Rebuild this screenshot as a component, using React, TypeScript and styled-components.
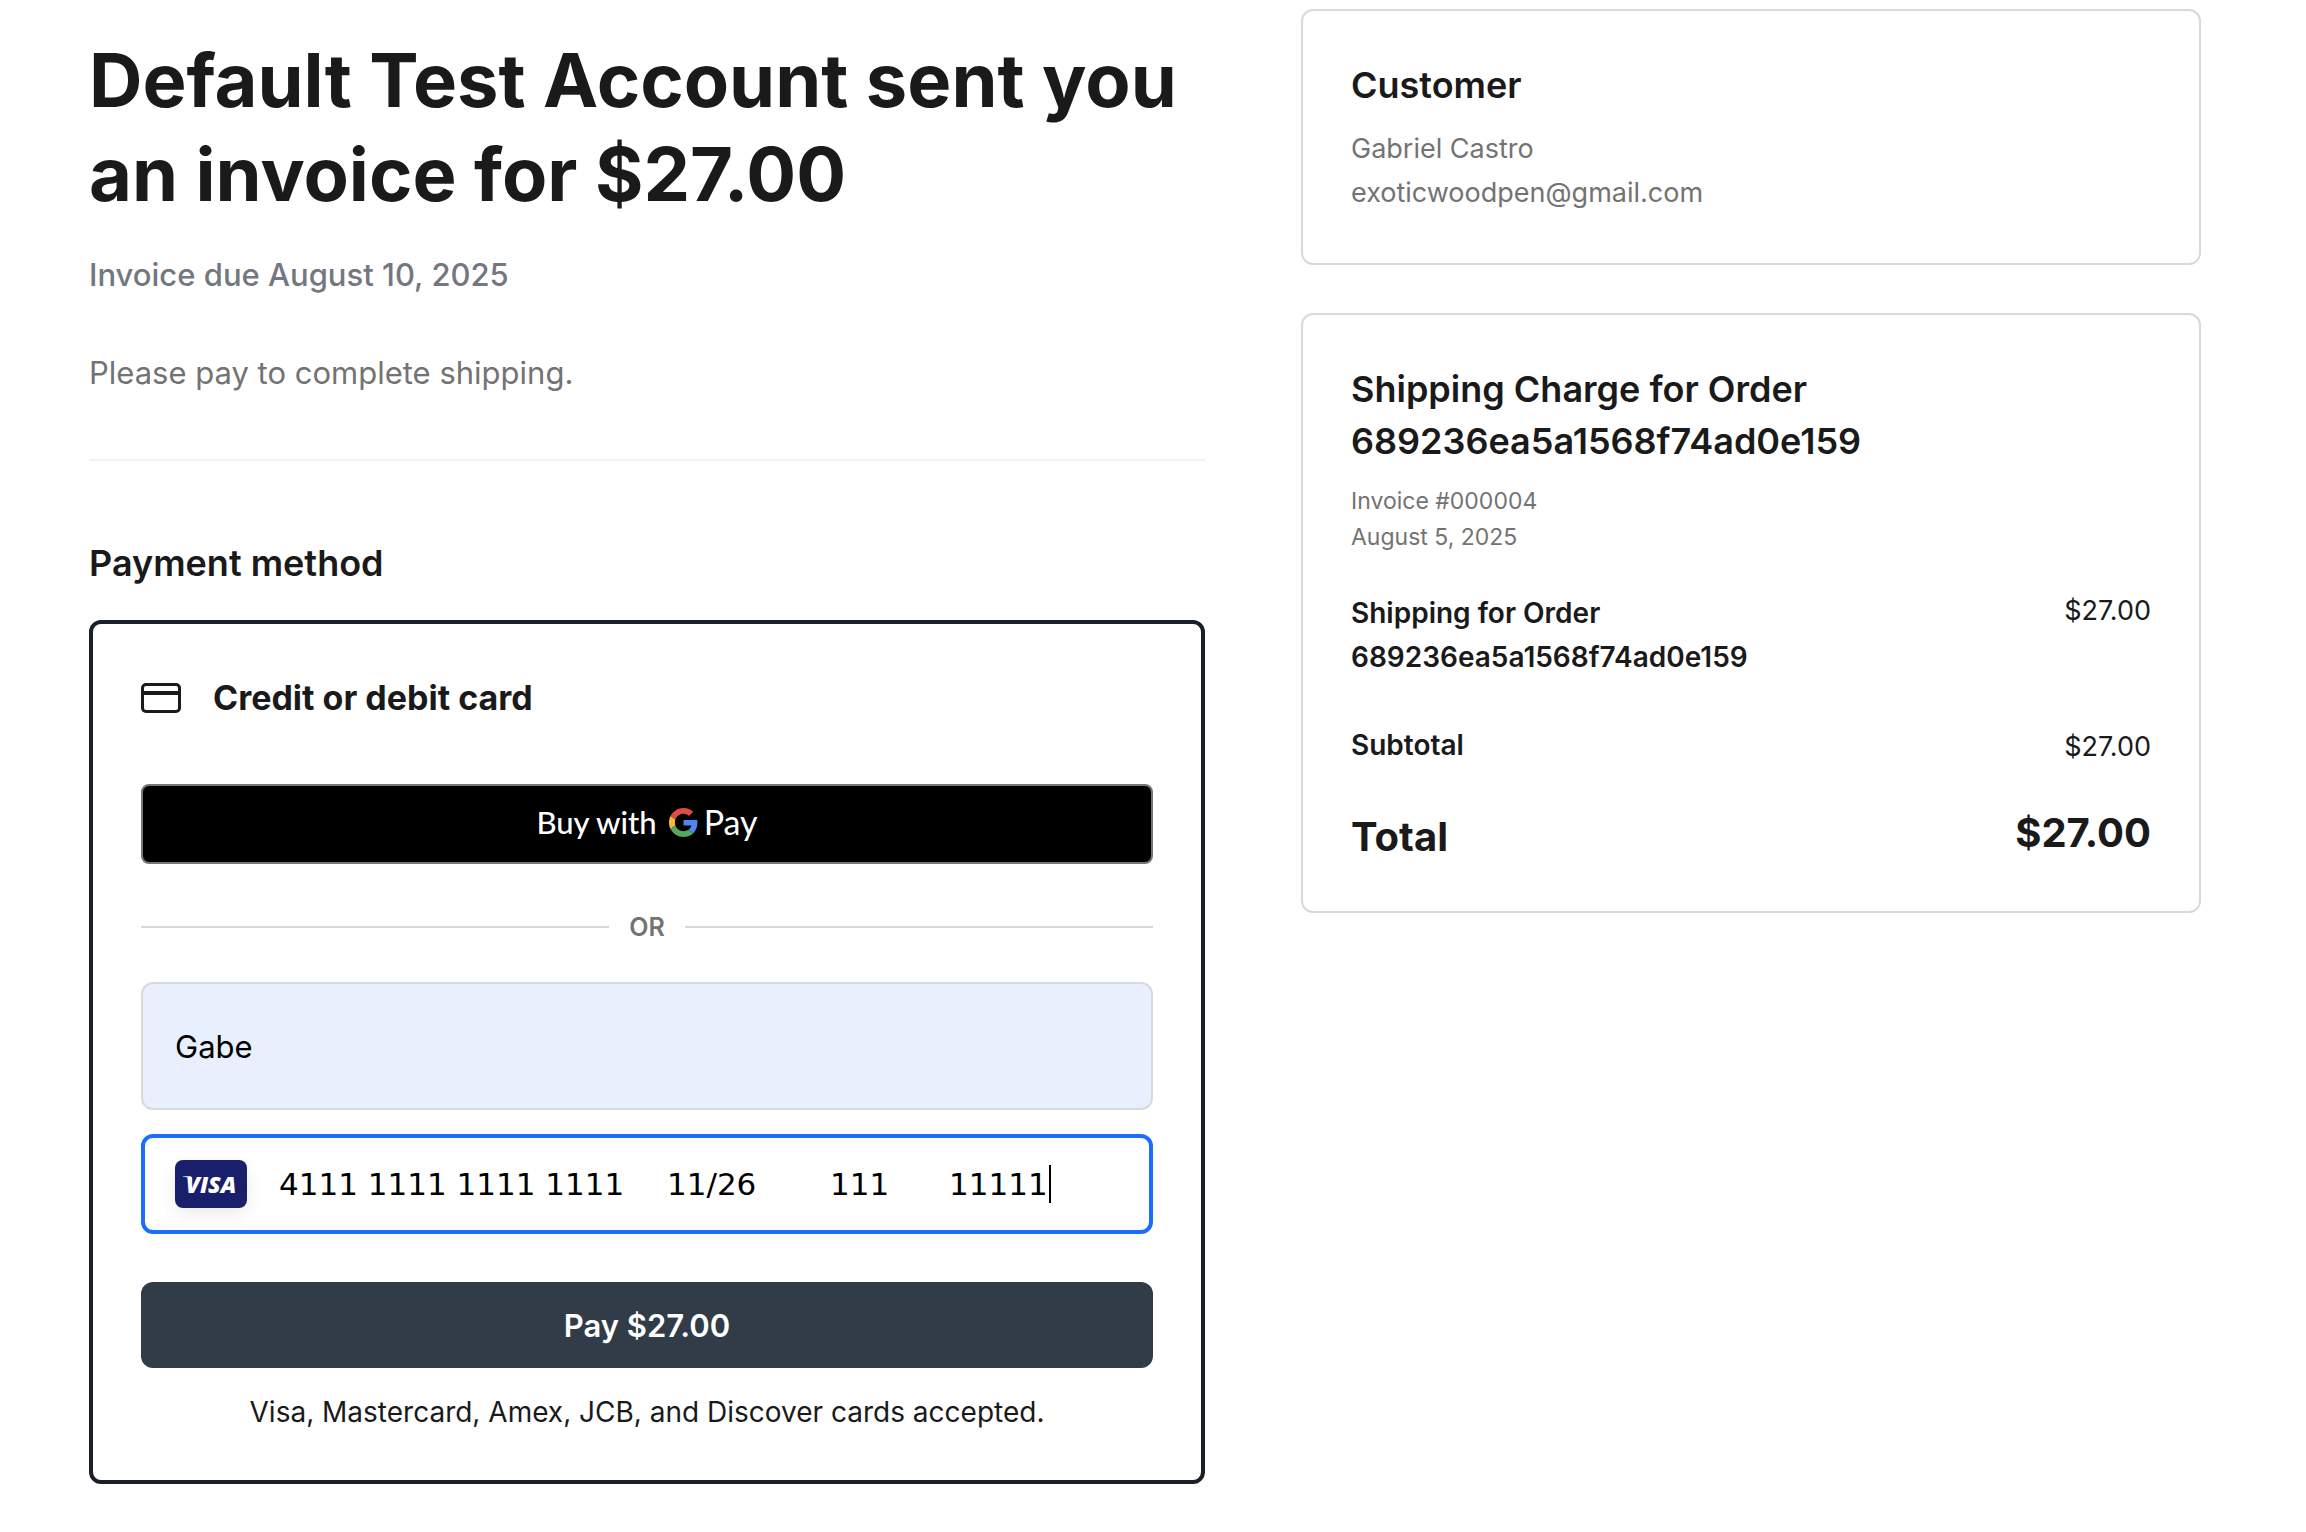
import React, { useState } from "react";
import styled, { createGlobalStyle } from "styled-components";

const INK = "#1a1a1a";
const MUTED = "#737373";
const LINE = "#d9d9d9";

const GlobalStyle = createGlobalStyle`
  *, *::before, *::after { box-sizing: border-box; }
  body {
    margin: 0;
    background: #fff;
    color: ${INK};
    font-family: Inter, "Liberation Sans", sans-serif;
  }
  h1, h2, h3, p, dl, dd { margin: 0; }
  button, input { font-family: inherit; }
`;

const Page = styled.div`
  display: grid;
  grid-template-columns: 31fr 25fr;
  gap: 96px;
  align-items: start;
  padding: 9px 105px 48px 89px;
`;

const Main = styled.main`
  min-width: 0;
  padding-top: 24px;
`;

const Title = styled.h1`
  font-size: 74px;
  font-weight: 700;
  line-height: 94px;
`;

const DueDate = styled.p`
  margin-top: 32px;
  color: #737780;
  font-size: 31px;
  font-weight: 500;
  line-height: 44px;
`;

const Message = styled.p`
  margin-top: 54px;
  color: ${MUTED};
  font-size: 31px;
  line-height: 44px;
`;

const Divider = styled.hr`
  height: 2px;
  margin: 64px 0 76px;
  border: 0;
  background: #f2f2f2;
`;

const SectionTitle = styled.h2`
  font-size: 36px;
  font-weight: 600;
  line-height: 52px;
`;

const PaymentBox = styled.form`
  display: flex;
  flex-direction: column;
  margin-top: 31px;
  padding: 48px;
  border: 4px solid #1a2027;
  border-radius: 12px;
`;

const MethodHeader = styled.div`
  display: flex;
  align-items: center;
  gap: 32px;
`;

const MethodTitle = styled.h3`
  font-size: 34px;
  font-weight: 700;
  line-height: 52px;
`;

const GooglePayButton = styled.button`
  display: flex;
  align-items: center;
  justify-content: center;
  height: 80px;
  margin-top: 60px;
  padding: 0 6px 4px;
  border: 2px solid #747775;
  border-radius: 8px;
  background: #000;
  color: #fff;
  font-family: Lato, "Liberation Sans", sans-serif;
  cursor: pointer;
`;

const BuyWith = styled.span`
  margin-right: 12px;
  font-size: 31px;
  font-weight: 500;
  line-height: 44px;
`;

const PayMark = styled.span`
  margin-left: 6px;
  font-size: 34px;
  line-height: 44px;
`;

const OrDivider = styled.div`
  display: flex;
  align-items: center;
  gap: 20px;
  margin: 45px 0 37px;
  color: ${MUTED};
  font-size: 25px;
  font-weight: 600;
  line-height: 36px;

  &::before,
  &::after {
    content: "";
    flex: 1;
    height: 2px;
    background: ${LINE};
  }
`;

const NameInput = styled.input`
  width: 100%;
  height: 128px;
  padding: 0 32px;
  border: 2px solid ${LINE};
  border-radius: 12px;
  outline: 0;
  background: #e8f0fe;
  color: #000;
  font-size: 31px;
`;

const CardField = styled.div`
  display: flex;
  align-items: center;
  gap: 32px;
  height: 100px;
  margin-top: 24px;
  padding: 0 30px;
  border: 4px solid #1a6dff;
  border-radius: 12px;
`;

const VisaBadge = styled.svg`
  flex: none;
  border-radius: 8px;
  background: #1a1f6c;
  box-shadow: 0 6px 18px rgba(0, 0, 0, 0.08);
`;

const CardInput = styled.input<{ $width: number }>`
  flex: 0 1 ${(p) => p.$width}px;
  min-width: 0;
  width: ${(p) => p.$width}px;
  padding: 0;
  border: 0;
  outline: 0;
  background: transparent;
  color: #000;
  font-family: "DejaVu Sans", sans-serif;
  font-size: 31px;
  line-height: 44px;
`;

const CaretField = styled.div`
  display: flex;
  align-items: center;
`;

const Caret = styled.span`
  width: 2px;
  height: 38px;
  background: #000;
`;

const PayButton = styled.button`
  height: 86px;
  margin-top: 48px;
  border: 0;
  border-radius: 12px;
  background: #313c48;
  color: #fff;
  font-size: 31px;
  font-weight: 600;
  cursor: pointer;
`;

const Accepted = styled.p`
  margin-top: 24px;
  font-size: 28px;
  line-height: 40px;
  text-align: center;
`;

const Sidebar = styled.aside`
  display: flex;
  flex-direction: column;
  gap: 48px;
  min-width: 0;
`;

const Card = styled.section`
  padding: 48px;
  border: 2px solid ${LINE};
  border-radius: 12px;
`;

const Details = styled.p<{ $small?: boolean }>`
  margin-top: 16px;
  color: ${MUTED};
  font-size: ${(p) => (p.$small ? 23 : 27)}px;
  line-height: ${(p) => (p.$small ? 36 : 44)}px;
`;

const Amounts = styled.dl`
  display: flex;
  flex-direction: column;
  gap: 44px;
  margin-top: 36px;
`;

const AmountRow = styled.div<{ $align: "flex-start" | "flex-end" }>`
  display: flex;
  justify-content: space-between;
  align-items: ${(p) => p.$align};
`;

const AmountLabel = styled.dt`
  max-width: 75%;
  font-size: 28px;
  font-weight: 600;
  line-height: 44px;
`;

const AmountValue = styled.dd`
  font-size: 27px;
  line-height: 40px;
`;

const TotalLabel = styled.dt`
  font-size: 40px;
  font-weight: 700;
  line-height: 52px;
`;

const TotalValue = styled.dd`
  font-size: 40px;
  font-weight: 700;
  line-height: 44px;
`;

function CardIcon() {
  return (
    <svg width="40" height="30" viewBox="0 0 40 30" fill="none" stroke={INK} strokeWidth="3" aria-hidden="true">
      <rect x="1.5" y="1.5" width="37" height="27" rx="3.5" />
      <path d="M1.5 10h37" strokeWidth="4" />
    </svg>
  );
}

function GoogleLogo() {
  return (
    <svg width="29" height="29" viewBox="0 0 48 48" aria-hidden="true">
      <path fill="#dc4e41" d="M24 9.5c3.54 0 6.71 1.22 9.21 3.6l6.85-6.85C35.9 2.38 30.47 0 24 0 14.62 0 6.51 5.38 2.56 13.22l7.98 6.19C12.43 13.72 17.74 9.5 24 9.5z" />
      <path fill="#4f86ec" d="M46.98 24.55c0-1.57-.15-3.09-.38-4.55H24v9.02h12.94c-.58 2.96-2.26 5.48-4.78 7.18l7.73 6c4.51-4.18 7.09-10.36 7.09-17.65z" />
      <path fill="#f4b840" d="M10.53 28.59c-.48-1.45-.76-2.99-.76-4.59s.27-3.14.76-4.59l-7.98-6.19C.92 16.46 0 20.12 0 24c0 3.88.92 7.54 2.56 10.78l7.97-6.19z" />
      <path fill="#58a55c" d="M24 48c6.48 0 11.93-2.13 15.89-5.81l-7.73-6c-2.15 1.45-4.92 2.3-8.16 2.3-6.26 0-11.57-4.22-13.47-9.91l-7.98 6.19C6.51 42.62 14.62 48 24 48z" />
    </svg>
  );
}

function Visa() {
  return (
    <VisaBadge width="72" height="48" viewBox="0 0 72 48" role="img" aria-label="Visa">
      <path d="M8 16.2h8l1.500 4C15 17.800 11.500 16.900 8 16.700z" fill="#fff" />
      <text x="36" y="33" textAnchor="middle" fill="#fff" fontFamily="Open Sans" fontStyle="italic" fontWeight="800" fontSize="23">
        VISA
      </text>
    </VisaBadge>
  );
}

export default function App() {
  const [name, setName] = useState("Gabe");
  return (
    <>
      <GlobalStyle />
      <Page>
        <Main>
          <Title>Default Test Account sent you an invoice for $27.00</Title>
          <DueDate>Invoice due August 10, 2025</DueDate>
          <Message>Please pay to complete shipping.</Message>
          <Divider />
          <SectionTitle>Payment method</SectionTitle>
          <PaymentBox onSubmit={(e) => e.preventDefault()}>
            <MethodHeader>
              <CardIcon />
              <MethodTitle>Credit or debit card</MethodTitle>
            </MethodHeader>
            <GooglePayButton type="button">
              <BuyWith>Buy with</BuyWith>
              <GoogleLogo />
              <PayMark>Pay</PayMark>
            </GooglePayButton>
            <OrDivider>OR</OrDivider>
            <NameInput aria-label="Name on card" value={name} onChange={(e) => setName(e.target.value)} />
            <CardField>
              <Visa />
              <CardInput $width={356} aria-label="Card number" defaultValue="4111 1111 1111 1111" />
              <CardInput $width={131} aria-label="Expiration date" defaultValue="11/26" />
              <CardInput $width={87} aria-label="CVV" defaultValue="111" />
              <CaretField>
                <CardInput $width={100} aria-label="ZIP code" defaultValue="11111" />
                <Caret />
              </CaretField>
            </CardField>
            <PayButton type="submit">Pay $27.00</PayButton>
            <Accepted>Visa, Mastercard, Amex, JCB, and Discover cards accepted.</Accepted>
          </PaymentBox>
        </Main>
        <Sidebar>
          <Card>
            <SectionTitle>Customer</SectionTitle>
            <Details>
              Gabriel Castro
              <br />
              exoticwoodpen@gmail.com
            </Details>
          </Card>
          <Card>
            <SectionTitle>Shipping Charge for Order 689236ea5a1568f74ad0e159</SectionTitle>
            <Details $small>
              Invoice #000004
              <br />
              August 5, 2025
            </Details>
            <Amounts>
              <AmountRow $align="flex-start">
                <AmountLabel>Shipping for Order 689236ea5a1568f74ad0e159</AmountLabel>
                <AmountValue>$27.00</AmountValue>
              </AmountRow>
              <AmountRow $align="flex-end">
                <AmountLabel>Subtotal</AmountLabel>
                <AmountValue>$27.00</AmountValue>
              </AmountRow>
              <AmountRow $align="flex-start">
                <TotalLabel>Total</TotalLabel>
                <TotalValue>$27.00</TotalValue>
              </AmountRow>
            </Amounts>
          </Card>
        </Sidebar>
      </Page>
    </>
  );
}
